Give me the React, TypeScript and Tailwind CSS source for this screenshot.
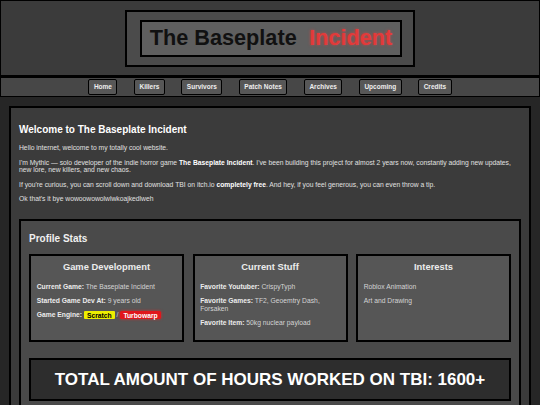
import React from "react";

const navItems = ["Home", "Killers", "Survivors", "Patch Notes", "Archives", "Upcoming", "Credits"];

function Card({ title, children }: { title: string; children: React.ReactNode }) {
  return (
    <div className="border-2 border-black bg-[#565656] px-[5.7px] pt-[6px] pb-[6px]">
      <h3 className="mb-[10px] text-center text-[9.36px] font-bold leading-[1.15] text-[#ececec]">{title}</h3>
      {children}
    </div>
  );
}

function Line({ label, children }: { label?: string; children?: React.ReactNode }) {
  return (
    <p className="mb-[6.6px] text-[6.75px] leading-[7.8px] text-[#d4d4d4]">
      {label && <b className="font-bold text-[#ececec]">{label}</b>}
      {label ? " " : null}
      {children}
    </p>
  );
}

const para = "mb-[6.6px] text-[6.75px] leading-[7.8px] text-[#e0e0e0]";

export default function App() {
  return (
    <div className="min-h-screen bg-[#262626] font-['Liberation_Sans',Arial,sans-serif]">
      <header className="flex h-[78px] items-center justify-center border border-b-[3px] border-black bg-[#3b3b3b]">
        <div className="border-2 border-black bg-[#4b4b4b] pl-[13px] pr-[11px] py-[8px]">
          <div className="flex h-[37px] items-center border-2 border-black bg-[#5f5f5f] px-[8px] text-[21.7px] font-bold leading-none">
            <span className="text-[#111]">The Baseplate</span>{" "}
            <span className="ml-[12.5px] text-[#e23a3a] [text-shadow:0_0_3px_rgba(255,60,60,0.6)]">Incident</span>
          </div>
        </div>
      </header>

      <nav className="flex h-[19px] items-center justify-center gap-[16.5px] border-x border-b border-black bg-[#474747]">
        {navItems.map((n) => (
          <span
            key={n}
            className="flex h-[16px] items-center rounded-[2px] border border-black bg-[#575757] px-[4.5px] text-[6.5px] font-bold text-[#eeeeee]"
          >
            {n}
          </span>
        ))}
      </nav>

      <main className="mx-[9px] mt-[9px] border-2 border-black bg-[#3b3b3b] px-[8px] pt-[16px] pb-[20px]">
        <h2 className="mb-[8.7px] text-[10px] font-bold leading-[1.15] text-white">Welcome to The Baseplate Incident</h2>
        <p className={para}>Hello internet, welcome to my totally cool website.</p>
        <p className={para}>
          I'm Mythic — solo developer of the indie horror game <b className="font-bold text-white">The Baseplate Incident</b>. I've been
          building this project for almost 2 years now, constantly adding new updates,
          <br />
          new lore, new killers, and new chaos.
        </p>
        <p className={para}>
          If you're curious, you can scroll down and download TBI on itch.io <b className="font-bold text-white">completely free</b>. And
          hey, if you feel generous, you can even throw a tip.
        </p>
        <p className={para}>Ok that's it bye wowoowowolwlwkoajkedlweh</p>

        <section className="mt-[16px] border-2 border-black bg-[#4a4a4a] px-[8px] pt-[12px] pb-[20px]">
          <h2 className="text-[10px] font-bold leading-[1.15] text-[#f0f0f0]">Profile Stats</h2>
          <div className="mt-[9.4px] grid grid-cols-3 gap-[8.5px]">
            <Card title="Game Development">
              <Line label="Current Game:">The Baseplate Incident</Line>
              <Line label="Started Game Dev At:">9 years old</Line>
              <Line label="Game Engine:">
                <span className="rounded-[1px] bg-[#eeee00] px-[3px] py-[0.5px] font-bold text-black">Scratch</span>
                {" / "}
                <span className="rounded-[1.5px] bg-[#e0161c] px-[3px] py-[0.5px] font-bold text-white shadow-[0_0_3px_rgba(255,30,30,0.8)]">
                  Turbowarp
                </span>
              </Line>
            </Card>
            <Card title="Current Stuff">
              <Line label="Favorite Youtuber:">CrispyTyph</Line>
              <Line label="Favorite Games:">TF2, Geoemtry Dash, Forsaken</Line>
              <Line label="Favorite Item:">50kg nuclear payload</Line>
            </Card>
            <Card title="Interests">
              <Line>Roblox Animation</Line>
              <Line>Art and Drawing</Line>
            </Card>
          </div>
          <div className="mt-[16.3px] border-2 border-black bg-[#2d2d2d] py-[10px] text-center text-[17px] font-bold leading-[1.15] text-white">
            TOTAL AMOUNT OF HOURS WORKED ON TBI: 1600+
          </div>
        </section>
      </main>
    </div>
  );
}
